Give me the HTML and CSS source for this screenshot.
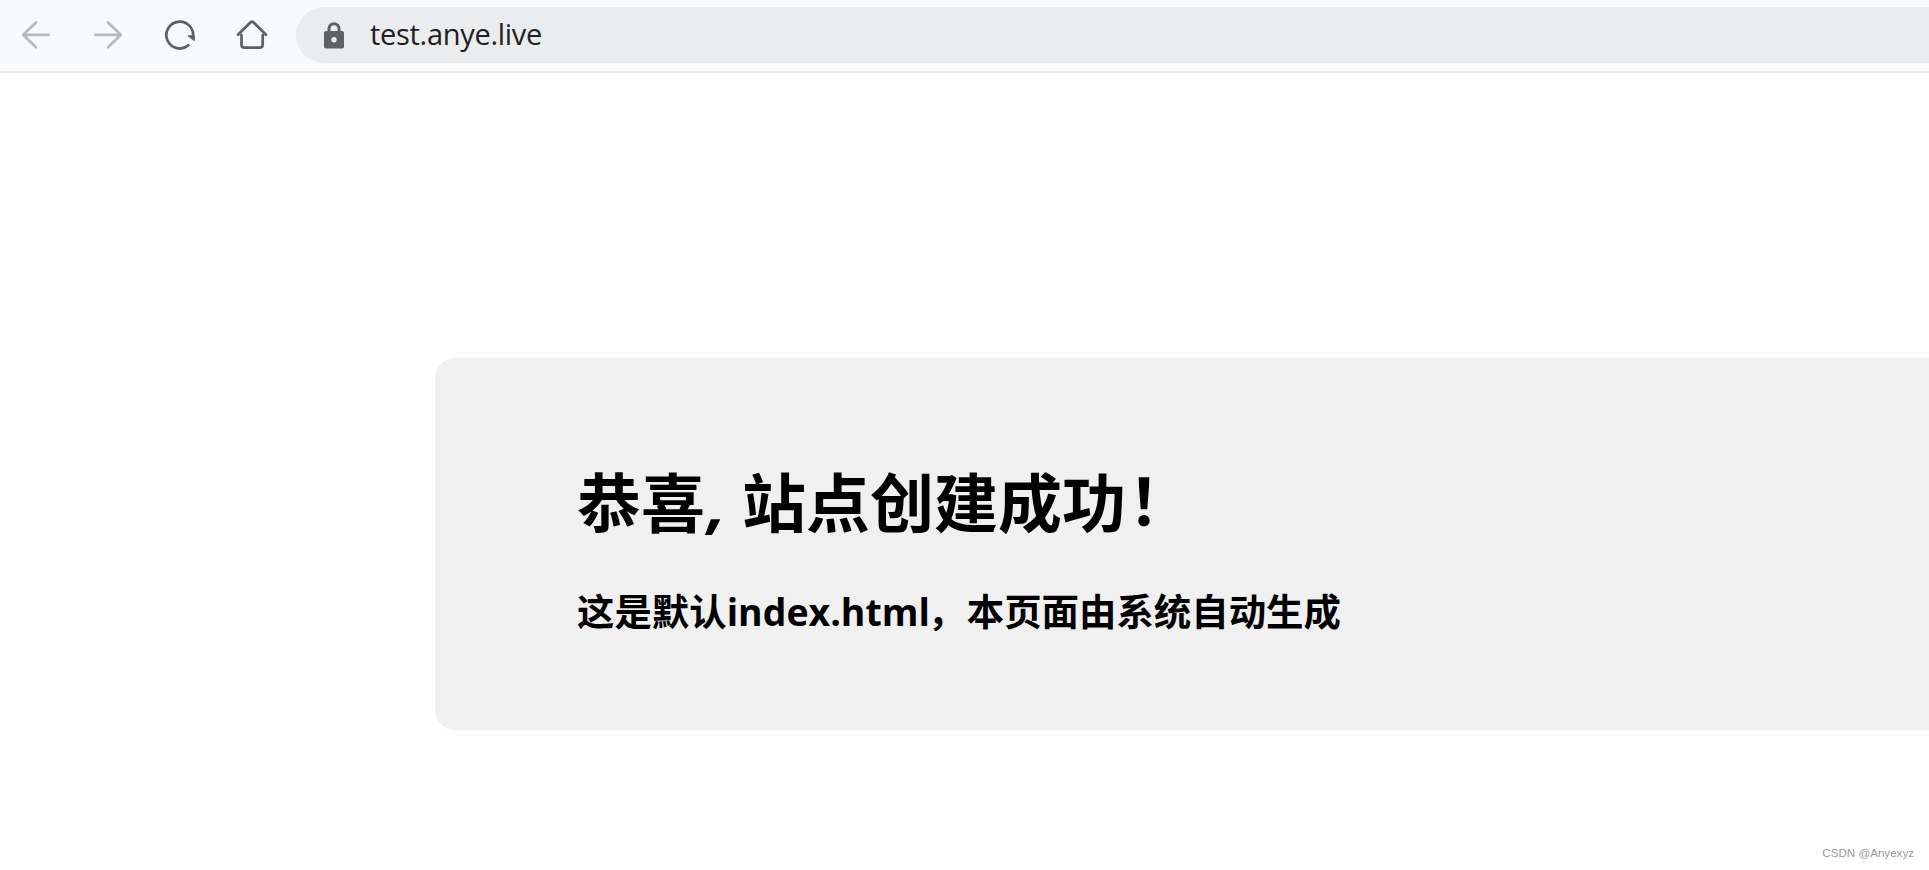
FILE: index.html
```html
<!DOCTYPE html>
<html lang="zh-CN">
<head>
<meta charset="utf-8">
<title>恭喜, 站点创建成功！</title>
<link rel="stylesheet" href="styles.css">
</head>
<body>
<header class="toolbar">
  <nav class="nav">
    <svg class="icon muted" viewBox="0 0 32 32"><path d="M28.7 15.8H3.5M16 3.5L3.2 15.8L16 28.2"/></svg>
    <svg class="icon muted" viewBox="0 0 32 32"><path d="M3.3 15.8H28.5M16 3.5L28.8 15.8L16 28.2"/></svg>
    <svg class="icon" viewBox="0 0 32 32"><path d="M24.4 26.3A13.4 13.4 0 1 1 29 18"/><path class="solid" d="M24.3 16.8H30.3V21.3Z"/></svg>
    <svg class="icon" viewBox="0 0 32 32"><path d="M2 15.7L14.6 3.2Q16 2 17.4 3.2L30 15.7M5.5 16V25.5Q5.5 28.7 8.7 28.7H23.5Q26.7 28.7 26.7 25.5V16"/></svg>
  </nav>
  <div class="address">
    <svg class="lock" viewBox="0 0 20 27"><path class="shackle" d="M5 12V6.7a5 5 0 0 1 10 0V12"/><path class="lock-body" fill-rule="evenodd" d="M2 9H18Q20 9 20 11V24.5Q20 26.5 18 26.5H2Q0 26.5 0 24.5V11Q0 9 2 9ZM10 15a2.7 2.7 0 1 0 0 5.4a2.7 2.7 0 1 0 0-5.4Z"/></svg>
    <span class="url">test.anye.live</span>
  </div>
</header>
<main class="page">
  <section class="card">
    <h1 class="title"><span>恭喜</span><span class="title-comma">,</span><span>站点创建成功</span><span class="bang">！</span></h1>
    <h3 class="subtitle"><span>这是默认</span><span class="file">index.html</span><span class="comma">，</span><span>本页面由系统自动生成</span></h3>
  </section>
</main>
<footer class="watermark">CSDN @Anyexyz</footer>
</body>
</html>
```
FILE: styles.css
```css
* { box-sizing: border-box; }
body {
  margin: 0;
  height: 870px;
  overflow: hidden;
  display: flex;
  flex-direction: column;
  background: #fff;
  color: #000;
  font-family: "Open Sans", "Noto Sans CJK SC", sans-serif;
}
.toolbar {
  flex: none;
  height: 73px;
  display: flex;
  align-items: flex-start;
  padding-top: 7px;
  background: #f9fafc;
  border-bottom: 2px solid #e6e7ea;
}
.nav {
  width: 296px;
  flex: none;
  display: flex;
  gap: 40px;
  padding: 12px 0 0 20px;
}
.icon {
  width: 32px;
  height: 32px;
  flex: none;
  fill: none;
  stroke: #5e6065;
  stroke-width: 2.7;
  stroke-linecap: round;
  stroke-linejoin: round;
}
.muted { stroke: #b8babc; }
.solid { fill: #5e6065; stroke-width: 1; }
.address {
  flex: 1;
  height: 56px;
  display: flex;
  align-items: center;
  padding-left: 28px;
  border-radius: 28px 0 0 28px;
  background: #ebecee;
}
.lock { width: 20px; height: 27px; flex: none; }
.shackle { fill: none; stroke: #606164; stroke-width: 3; }
.lock-body { fill: #606164; }
.url {
  margin-left: 26px;
  color: #1f2024;
  font: 29px/54px "Open Sans", sans-serif;
  letter-spacing: -0.3px;
  padding-bottom: 2px;
}
.page { flex: 1; padding: 285px 0 0 435px; }
.card {
  height: 372px;
  padding: 103px 0 0 142px;
  border-radius: 20px 0 0 20px;
  background: #f0f0f0;
}
.title, .subtitle { display: flex; margin: 0; white-space: nowrap; font-weight: 700; }
.title { height: 84px; font-size: 64px; line-height: 84px; }
.title-comma { width: 37px; padding-left: 3px; font-style: italic; }
.bang { margin: -2px 0 0 2px; }
.subtitle { margin-top: 42px; font-size: 37.44px; line-height: 50px; }
.file { width: 200px; margin-right: 1px; }
.comma { width: 39px; padding-left: 0; }
.watermark {
  height: 34px;
  padding-right: 15px;
  text-align: right;
  color: #999;
  font: 11.6px/34px "Liberation Sans", sans-serif;
}
```
